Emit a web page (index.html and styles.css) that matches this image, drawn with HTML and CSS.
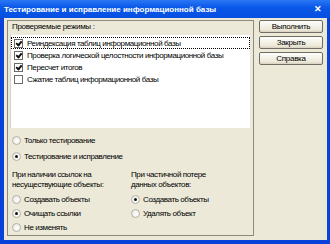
FILE: index.html
```html
<!DOCTYPE html>
<html lang="ru">
<head>
    <meta charset="UTF-8">
    <title>Тестирование и исправление информационной базы</title>
    <link rel="stylesheet" href="styles.css">
</head>
<body>
    <div class="window">
        <div class="titlebar">
            <span class="title">Тестирование и исправление информационной базы</span>
            <span class="close">✕</span>
        </div>

        <div class="content">
            <div class="panel">
                <div class="caption">Проверяемые режимы :</div>

                <!-- список режимов -->
                <div class="list">
                    <div class="item focus"><span class="check on"></span>Реиндексация таблиц информационной базы</div>
                    <div class="item"><span class="check on"></span>Проверка логической целостности информационной базы</div>
                    <div class="item"><span class="check on"></span>Пересчет итогов</div>
                    <div class="item"><span class="check"></span>Сжатие таблиц информационной базы</div>
                </div>

                <div class="modes">
                    <div class="opt"><span class="radio"></span>Только тестирование</div>
                    <div class="opt"><span class="radio on"></span>Тестирование и исправление</div>
                </div>

                <div class="groups">
                    <div class="group">
                        <div class="group-label">При наличии ссылок на<br>несуществующие объекты:</div>
                        <div class="opt"><span class="radio"></span>Создавать объекты</div>
                        <div class="opt"><span class="radio on"></span>Очищать ссылки</div>
                        <div class="opt"><span class="radio"></span>Не изменять</div>
                    </div>
                    <div class="group right">
                        <div class="group-label">При частичной потере<br>данных объектов:</div>
                        <div class="opt"><span class="radio on"></span>Создавать объекты</div>
                        <div class="opt"><span class="radio"></span>Удалять объект</div>
                    </div>
                </div>
            </div>

            <div class="buttons">
                <button class="btn">Выполнить</button>
                <button class="btn">Закрыть</button>
                <button class="btn">Справка</button>
            </div>
        </div>
    </div>
</body>
</html>
```

FILE: styles.css
```css
body {
    margin: 0;
    font-family: "Liberation Sans", Arial, sans-serif;
    font-size: 8px;
    color: #000;
}
.window {
    width: 330px;
    height: 244px;
    box-sizing: border-box;
    background-color: #ece9d8;
    border-left: 4px solid #0842d8;
    border-right: 3px solid #0842d8;
    border-bottom: 4px solid #0842d8;
    display: flex;
    flex-direction: column;
}
.titlebar {
    height: 18px;
    margin: 0 -3px 0 -4px;
    padding: 0 8px 0 4px;
    background: linear-gradient(#2a78f5, #0a58e8 40%, #0650e0);
    color: white;
    display: flex;
    align-items: center;
    justify-content: space-between;
}
.title {
    font-weight: bold;
    font-size: 8px;
}
.close {
    font-size: 9px;
    font-weight: bold;
}

.content {
    display: flex;
    gap: 5px;
    padding: 2px 0 0 3px;
}
.panel {
    width: 247px;
    height: 216px;
    box-sizing: border-box;
    border: 1px solid #8e8b7c;
    padding: 0 3px 0 2px;
}
.caption {
    height: 14px;
    line-height: 12px;
    padding: 0 0 0 2px;
    letter-spacing: -0.3px;
}
.list {
    height: 93px;
    background-color: white;
    border-left: 1px solid #d8d5c8;
    padding-top: 2px;
    box-sizing: border-box;
}
.item {
    height: 12px;
    display: flex;
    align-items: center;
    gap: 4px;
    padding-left: 3px;
    white-space: nowrap;
    letter-spacing: -0.4px;
}
.item.focus {
    outline: 1px dotted #000;
    outline-offset: -1px;
}
.check {
    width: 7px;
    height: 7px;
    border: 1px solid #6b6b6b;
    background-color: #fff;
    position: relative;
    flex-shrink: 0;
}
.check.on::after {
    content: "";
    position: absolute;
    left: 2px;
    top: 0;
    width: 2px;
    height: 4px;
    border: solid #111;
    border-width: 0 2px 2px 0;
    transform: rotate(40deg);
}

.modes {
    padding: 4px 0 0 2px;
}
.modes .opt {
    height: 16px;
}
.opt {
    display: flex;
    align-items: center;
    gap: 3px;
    letter-spacing: -0.4px;
    white-space: nowrap;
}
.radio {
    width: 7px;
    height: 7px;
    border: 1px solid #b4b2a8;
    border-radius: 50%;
    background: radial-gradient(circle at 60% 60%, #fff, #e6e4dc);
    position: relative;
    flex-shrink: 0;
}
.radio.on::after {
    content: "";
    position: absolute;
    left: 2px;
    top: 2px;
    width: 3px;
    height: 3px;
    border-radius: 50%;
    background-color: #111;
}

.groups {
    display: flex;
    padding: 6px 0 0 2px;
}
.group {
    width: 122px;
}
.group-label {
    line-height: 10px;
    height: 20px;
    margin-bottom: 2px;
    letter-spacing: -0.4px;
    white-space: nowrap;
}
.group .opt {
    height: 14px;
}

.buttons {
    display: flex;
    flex-direction: column;
    gap: 3px;
}
.btn {
    width: 64px;
    height: 13px;
    padding: 0;
    font-family: "Liberation Sans", Arial, sans-serif;
    font-size: 8px;
    letter-spacing: -0.3px;
    background: linear-gradient(#fdfdfb, #ece9d8 80%, #d6d0c0);
    border: 1px solid #6f6d64;
    border-radius: 2px;
    color: #000;
}
```
